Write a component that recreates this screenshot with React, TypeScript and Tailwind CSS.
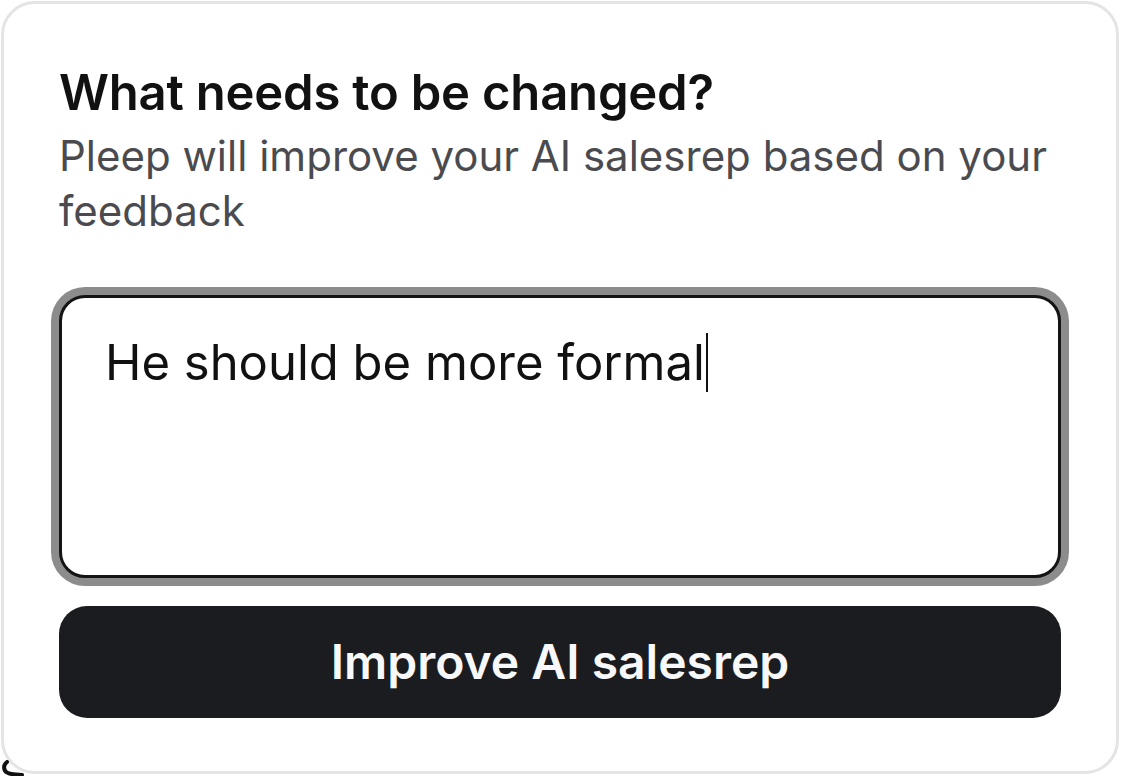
export default function App() {
  return (
    <main className="relative h-[776px] w-[1122px] overflow-hidden bg-white p-[1px] pr-[3px] font-['Inter',sans-serif] text-neutral-950">
      <div className="flex h-[773px] flex-col rounded-[34px] border-[3px] border-[#e4e4e7] bg-white px-[55px] pt-[61px]">
        <h2 className="text-[49px] font-semibold leading-[56px] tracking-[-0.2px] text-[#111111]">
          What needs to be changed?
        </h2>
        <p className="mt-[7px] text-[42px] leading-[55px] text-[#4b4b4f]">
          Pleep will improve your AI salesrep based on your feedback
        </p>

        <div className="mt-[57px] h-[283px] w-full rounded-[26px] border-[3px] border-[#141414] bg-white px-[43px] pt-[23px] text-[49px] leading-[60px] text-[#111111] ring-8 ring-[#8c8c8c]">
          He should be more formal
          <span className="ml-[1px] inline-block h-[59px] w-[2px] translate-y-[12px] bg-[#111111] align-baseline" />
        </div>

        <button
          className="mt-[28px] h-[112px] w-full rounded-[28px] bg-[#1b1c20] text-[48px] font-semibold text-[#f7f8fa]"
          type="button"
        >
          Improve AI salesrep
        </button>
      </div>

      <svg className="absolute bottom-0 left-0 h-[16px] w-[30px]" viewBox="0 0 30 16" fill="none">
        <path d="M7 2 C3 5 3 11 8 13 C12 15 16 14 22 15" stroke="#111111" strokeWidth="4" strokeLinecap="round" />
      </svg>
    </main>
  );
}
